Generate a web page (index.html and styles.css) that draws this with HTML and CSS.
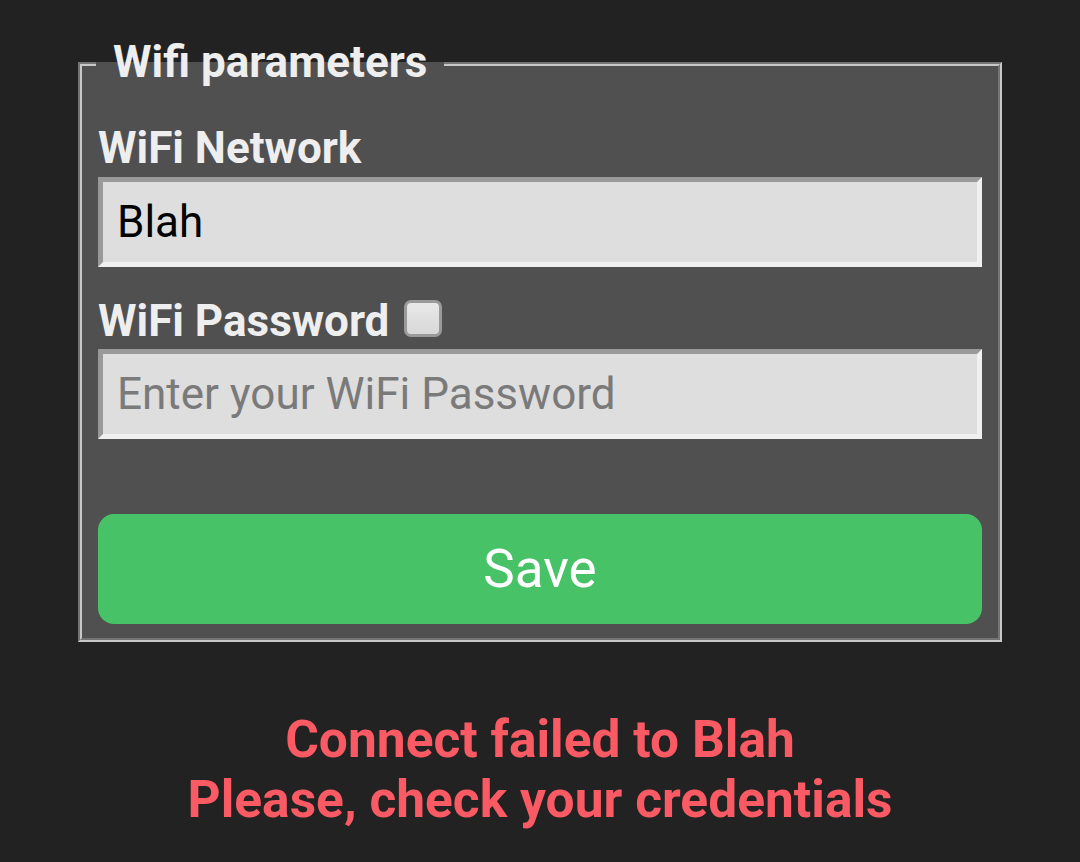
FILE: index.html
```html
<!DOCTYPE html>
<html>
<head>
<meta charset="utf-8">
<link rel="stylesheet" href="styles.css">
</head>
<body>
<main class="page">
  <form class="wifi-form">
    <fieldset class="panel">
      <legend class="panel-title">Wifi parameters</legend>
      <label class="field-label" for="ssid">WiFi Network</label>
      <input class="text-input" id="ssid" type="text" value="Blah">
      <div class="field-label label-row">
        <label for="pwd">WiFi Password</label>
        <input class="show-box" type="checkbox" aria-label="Show password">
      </div>
      <input class="text-input" id="pwd" type="password" placeholder="Enter your WiFi Password">
      <button class="save-btn" type="button">Save</button>
    </fieldset>
  </form>
  <p class="error-msg">Connect failed to Blah<br>Please, check your credentials</p>
</main>
</body>
</html>
```
FILE: styles.css
```css
html, body {
  margin: 0;
  padding: 0;
  background: #222222;
  font-family: Roboto, "Liberation Sans", sans-serif;
}

.page {
  display: flex;
  flex-direction: column;
  align-items: center;
  padding-top: 38px;
}

.wifi-form {
  width: 924px;
}

.panel {
  margin: 0;
  padding: 32px 16px 14px 16px;
  border: 4px groove #c8c8c8;
  background: #505050;
  display: flex;
  flex-direction: column;
  min-width: 0;
}

.panel-title {
  padding: 0 17px 4px;
  margin-left: -2px;
  color: #eeeeee;
  font-size: 44px;
  font-weight: 700;
  line-height: 48px;
}

.field-label {
  color: #eeeeee;
  font-size: 44px;
  font-weight: 700;
  line-height: 52px;
  margin-bottom: 3px;
}

.label-row {
  display: flex;
  align-items: center;
  gap: 15px;
  margin-top: 28px;
  margin-bottom: 2px;
}

.text-input {
  box-sizing: border-box;
  width: 100%;
  height: 90px;
  margin: 0;
  padding: 0 14px;
  border-style: solid;
  border-width: 5px;
  border-color: #999999 #f0f0f0 #f0f0f0 #999999;
  background: #dedede;
  color: #000000;
  font-family: Roboto, "Liberation Sans", sans-serif;
  font-size: 44px;
  outline: none;
}

.text-input::placeholder {
  color: #7a7a7a;
}

.show-box {
  appearance: none;
  -webkit-appearance: none;
  box-sizing: border-box;
  width: 38px;
  height: 37px;
  margin: 0 0 5px;
  border: 3px solid #9a9a9a;
  border-radius: 7px;
  background: linear-gradient(#e8e8e8, #d8d8d8);
}

.save-btn {
  margin-top: 75px;
  height: 110px;
  border: none;
  border-radius: 16px;
  background: #47c266;
  color: #ffffff;
  font-family: Roboto, "Liberation Sans", sans-serif;
  font-size: 53px;
  padding: 0;
}

.error-msg {
  margin: 68px 0 0;
  color: #fa5a64;
  font-size: 51.5px;
  font-weight: 700;
  line-height: 60px;
  text-align: center;
}
```
